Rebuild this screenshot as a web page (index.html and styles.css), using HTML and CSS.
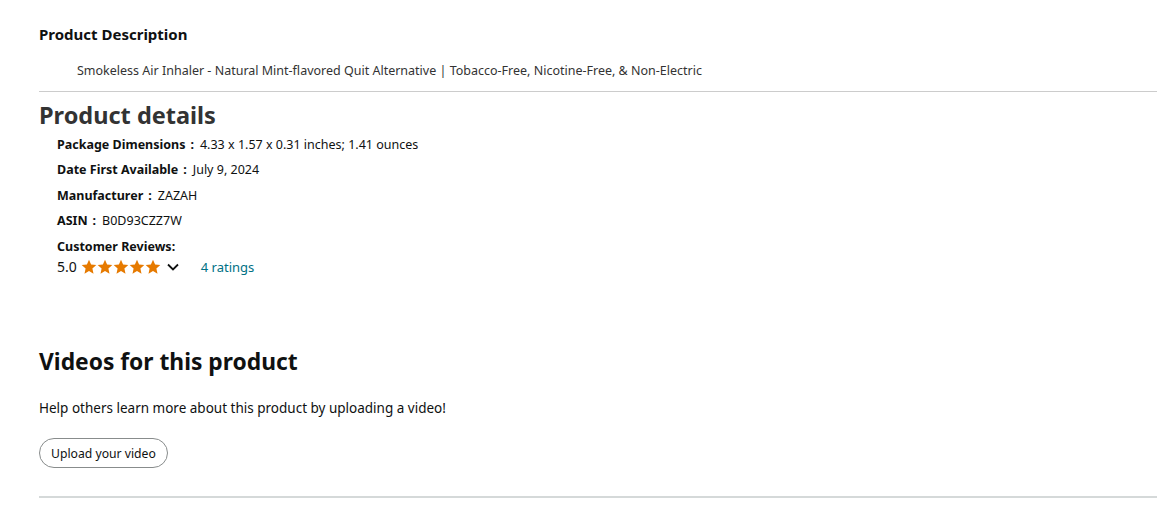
FILE: index.html
```html
<!DOCTYPE html>
<html lang='en'>
<head>
    <meta charset='UTF-8'>
    <meta name='viewport' content='width=device-width, initial-scale=1.0'>
    <title>Product</title>
    <link rel="stylesheet" href="styles.css">
</head>
<body>
    <div class="page">
        <section class="description">
            <h2 class="desc_title">Product Description</h2>
            <p class="desc_text">Smokeless Air Inhaler - Natural Mint-flavored Quit Alternative | Tobacco-Free, Nicotine-Free, &amp; Non-Electric</p>
        </section>

        <section class="details">
            <h2 class="details_title">Product details</h2>
            <ul class="details_list">
                <li><span class="label">Package Dimensions<span class="colon">:</span></span><span>4.33 x 1.57 x 0.31 inches; 1.41 ounces</span></li>
                <li><span class="label">Date First Available<span class="colon">:</span></span><span>July 9, 2024</span></li>
                <li><span class="label">Manufacturer<span class="colon">:</span></span><span>ZAZAH</span></li>
                <li><span class="label">ASIN<span class="colon">:</span></span><span>B0D93CZZ7W</span></li>
                <li class="reviews">
                    <span class="label">Customer Reviews:</span>
                    <div class="rating">
                        <span class="score">5.0</span>
                        <span class="stars">
                            <svg width="80" height="16" viewBox="0 0 80 16">
                                <defs>
                                    <path id="star" d="M8 0.8 L10.1 5.6 L15.3 6.1 L11.4 9.6 L12.5 14.8 L8 12.1 L3.5 14.8 L4.6 9.6 L0.7 6.1 L5.9 5.6 Z" fill="#e67a00"/>
                                </defs>
                                <use href="#star" x="0"/>
                                <use href="#star" x="16"/>
                                <use href="#star" x="32"/>
                                <use href="#star" x="48"/>
                                <use href="#star" x="64"/>
                            </svg>
                        </span>
                        <svg class="chevron" width="14" height="10" viewBox="0 0 14 10">
                            <path d="M2 2.5 L7 7.5 L12 2.5" fill="none" stroke="#0f1111" stroke-width="1.8"/>
                        </svg>
                        <a class="ratings" href="#">4 ratings</a>
                    </div>
                </li>
            </ul>
        </section>

        <section class="videos">
            <h2 class="videos_title">Videos for this product</h2>
            <p class="videos_text">Help others learn more about this product by uploading a video!</p>
            <button class="upload">Upload your video</button>
        </section>
    </div>
</body>
</html>
```

FILE: styles.css
```css
body
{
    font-family: 'Noto Sans', Arial, sans-serif;
    margin: 0;
    color: #0f1111;
    background: #fff;
}
.page
{
    padding: 23px 0 0 39px;
}
.description
{
    border-bottom: 1px solid #cccccc;
    padding-bottom: 10px;
}
.desc_title
{
    font-size: 15px;
    font-weight: 700;
    margin: 0 0 16px 0;
    line-height: 22px;
}
.desc_text
{
    font-size: 12.5px;
    color: #333;
    margin: 0 0 0 38px;
    line-height: 20px;
}
.details_title
{
    font-size: 23.5px;
    font-weight: 700;
    color: #333;
    margin: 6px 0 3px 0;
    line-height: 34px;
}
.details_list
{
    list-style: none;
    margin: 0;
    padding: 0 0 0 18px;
}
.details_list li
{
    font-size: 12.5px;
    line-height: 20px;
    margin-bottom: 5.3px;
    display: flex;
}
.label
{
    font-weight: 700;
}
.colon
{
    margin: 0 6px 0 5px;
}
.reviews
{
    flex-direction: column;
    padding-top: 1px;
}
.rating
{
    display: flex;
    align-items: center;
    font-size: 14px;
}
.stars
{
    display: flex;
    margin-left: 4px;
}
.chevron
{
    margin-left: 5px;
}
.ratings
{
    color: #007185;
    text-decoration: none;
    margin-left: 21px;
    font-size: 13px;
}
.videos
{
    margin-top: 69px;
    border-bottom: 2px solid #d5d9d9;
    padding-bottom: 28px;
}
.videos_title
{
    font-size: 22.8px;
    font-weight: 700;
    margin: 0 0 20px 0;
    line-height: 32px;
}
.videos_text
{
    font-size: 13.5px;
    margin: 0 0 20px 0;
    line-height: 20px;
}
.upload
{
    font-family: inherit;
    font-size: 12.2px;
    color: #0f1111;
    background: #fff;
    border: 1px solid #888c8c;
    border-radius: 16px;
    height: 30px;
    padding: 0 11px;
}
```
